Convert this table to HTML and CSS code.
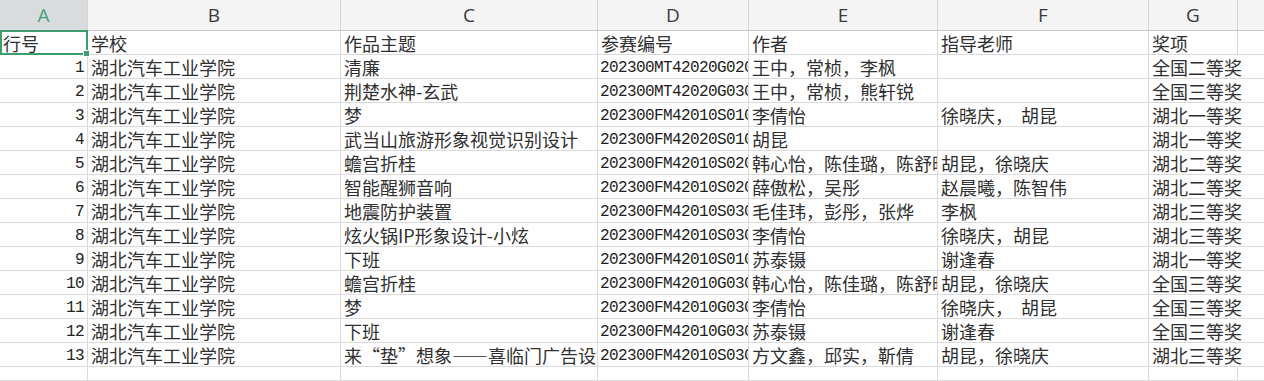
FILE: index.html
```
<!DOCTYPE html>
<html lang="zh-CN">
<head>
<meta charset="utf-8">
<title>Sheet</title>
<link rel="stylesheet" href="styles.css">
</head>
<body>
<div class="sheet">
  <div class="ch ch-sel">A</div><div class="ch">B</div><div class="ch">C</div><div class="ch">D</div><div class="ch">E</div><div class="ch">F</div><div class="ch">G</div><div class="ch ch-last"></div>

  <div class="c sel">行号</div><div class="c">学校</div><div class="c">作品主题</div><div class="c">参赛编号</div><div class="c">作者</div><div class="c">指导老师</div><div class="c">奖项</div><div class="c last"></div>

  <div class="c num">1</div><div class="c">湖北汽车工业学院</div><div class="c">清廉</div><div class="c code">202300MT42020G0201</div><div class="c">王中，常桢，李枫</div><div class="c"></div><div class="c spill">全国二等奖</div><div class="c last"></div>

  <div class="c num">2</div><div class="c">湖北汽车工业学院</div><div class="c">荆楚水神-玄武</div><div class="c code">202300MT42020G0302</div><div class="c">王中，常桢，熊轩锐</div><div class="c"></div><div class="c spill">全国三等奖</div><div class="c last"></div>

  <div class="c num">3</div><div class="c">湖北汽车工业学院</div><div class="c">梦</div><div class="c code">202300FM42010S0101</div><div class="c">李倩怡</div><div class="c pre">徐晓庆，  胡昆</div><div class="c spill">湖北一等奖</div><div class="c last"></div>

  <div class="c num">4</div><div class="c">湖北汽车工业学院</div><div class="c">武当山旅游形象视觉识别设计</div><div class="c code">202300FM42020S0102</div><div class="c">胡昆</div><div class="c"></div><div class="c spill">湖北一等奖</div><div class="c last"></div>

  <div class="c num">5</div><div class="c">湖北汽车工业学院</div><div class="c">蟾宫折桂</div><div class="c code">202300FM42010S0201</div><div class="c">韩心怡，陈佳璐，陈舒晴</div><div class="c">胡昆，徐晓庆</div><div class="c spill">湖北二等奖</div><div class="c last"></div>

  <div class="c num">6</div><div class="c">湖北汽车工业学院</div><div class="c">智能醒狮音响</div><div class="c code">202300FM42010S0202</div><div class="c">薛傲松，吴彤</div><div class="c">赵晨曦，陈智伟</div><div class="c spill">湖北二等奖</div><div class="c last"></div>

  <div class="c num">7</div><div class="c">湖北汽车工业学院</div><div class="c">地震防护装置</div><div class="c code">202300FM42010S0301</div><div class="c">毛佳玮，彭彤，张烨</div><div class="c">李枫</div><div class="c spill">湖北三等奖</div><div class="c last"></div>

  <div class="c num">8</div><div class="c">湖北汽车工业学院</div><div class="c">炫火锅IP形象设计-小炫</div><div class="c code">202300FM42010S0302</div><div class="c">李倩怡</div><div class="c">徐晓庆，胡昆</div><div class="c spill">湖北三等奖</div><div class="c last"></div>

  <div class="c num">9</div><div class="c">湖北汽车工业学院</div><div class="c">下班</div><div class="c code">202300FM42010S0103</div><div class="c">苏泰镊</div><div class="c">谢逢春</div><div class="c spill">湖北一等奖</div><div class="c last"></div>

  <div class="c num">10</div><div class="c">湖北汽车工业学院</div><div class="c">蟾宫折桂</div><div class="c code">202300FM42010G0301</div><div class="c">韩心怡，陈佳璐，陈舒晴</div><div class="c">胡昆，徐晓庆</div><div class="c spill">全国三等奖</div><div class="c last"></div>

  <div class="c num">11</div><div class="c">湖北汽车工业学院</div><div class="c">梦</div><div class="c code">202300FM42010G0302</div><div class="c">李倩怡</div><div class="c pre">徐晓庆，  胡昆</div><div class="c spill">全国三等奖</div><div class="c last"></div>

  <div class="c num">12</div><div class="c">湖北汽车工业学院</div><div class="c">下班</div><div class="c code">202300FM42010G0303</div><div class="c">苏泰镊</div><div class="c">谢逢春</div><div class="c spill">全国三等奖</div><div class="c last"></div>

  <div class="c num">13</div><div class="c">湖北汽车工业学院</div><div class="c">来“垫”想象——喜临门广告设计</div><div class="c code">202300FM42010S0303</div><div class="c">方文鑫，邱实，靳倩</div><div class="c">胡昆，徐晓庆</div><div class="c spill">湖北三等奖</div><div class="c last"></div>

  <div class="c"></div><div class="c"></div><div class="c"></div><div class="c"></div><div class="c"></div><div class="c"></div><div class="c"></div><div class="c last"></div>
</div>
</body>
</html>
```
FILE: styles.css
```
html, body {
  margin: 0;
  padding: 0;
  background: #ffffff;
  overflow: hidden;
}

.sheet {
  display: grid;
  grid-template-columns: 88px 253px 257px 151px 189px 211px 89px 1fr;
  grid-template-rows: 31px repeat(14, 24px) 1fr;
  width: 1264px;
  height: 381px;
}

.ch {
  box-sizing: border-box;
  background: #f4f4f4;
  border-right: 1px solid #d4d4d4;
  border-bottom: 1px solid #c9c9c9;
  color: #3a3a3a;
  font-family: "Open Sans", "Noto Sans", sans-serif;
  font-size: 19px;
  line-height: 30px;
  text-align: center;
}

.ch-sel {
  background: #d9dcdf;
  color: #46a277;
}

.c {
  box-sizing: border-box;
  position: relative;
  border-right: 1px solid #dadada;
  border-bottom: 1px solid #dadada;
  padding: 2px 2px 0 3px;
  font-family: "Noto Sans CJK SC", "Liberation Serif", sans-serif;
  font-size: 18px;
  line-height: 21px;
  color: #303030;
  white-space: nowrap;
  overflow: hidden;
}

.pre {
  white-space: pre;
}

.num {
  text-align: right;
  padding-right: 3px;
  font-family: "Liberation Mono", monospace;
  font-size: 16px;
  letter-spacing: -0.6px;
  color: #222;
  padding-top: 3px;
}

.code {
  font-family: "Liberation Mono", monospace;
  font-size: 16px;
  letter-spacing: -0.6px;
  color: #1e1e1e;
  padding-top: 3px;
  padding-left: 2px;
}

.spill {
  overflow: visible;
  z-index: 1;
  border-right-color: transparent;
}

.last {
  border-right: none;
}

.ch-last {
  border-right: none;
}

.sel {
  overflow: visible;
  z-index: 2;
}

.sel::after {
  content: "";
  position: absolute;
  left: 0;
  top: -1px;
  right: -1px;
  bottom: -1px;
  border: 2px solid #3c9d6e;
  pointer-events: none;
}

.sel::before {
  content: "";
  position: absolute;
  right: -3px;
  bottom: -3px;
  width: 5px;
  height: 5px;
  background: #3c9d6e;
  border: 1px solid #ffffff;
  z-index: 3;
}
```
